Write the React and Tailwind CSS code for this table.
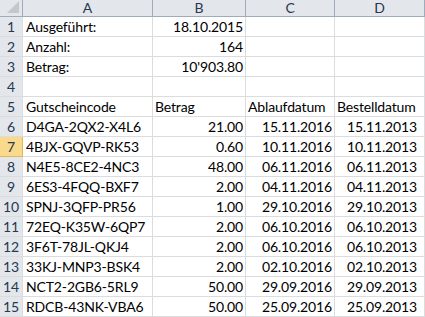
import React from 'react';

const rows = [
  { a: 'Ausgeführt:', b: '18.10.2015' },
  { a: 'Anzahl:', b: '164' },
  { a: 'Betrag:', b: "10'903.80" },
  {},
  { a: 'Gutscheincode', bl: 'Betrag', cl: 'Ablaufdatum', dl: 'Bestelldatum' },
  { a: 'D4GA-2QX2-X4L6', b: '21.00', c: '15.11.2016', d: '15.11.2013' },
  { a: '4BJX-GQVP-RK53', b: '0.60', c: '10.11.2016', d: '10.11.2013' },
  { a: 'N4E5-8CE2-4NC3', b: '48.00', c: '06.11.2016', d: '06.11.2013' },
  { a: '6ES3-4FQQ-BXF7', b: '2.00', c: '04.11.2016', d: '04.11.2013' },
  { a: 'SPNJ-3QFP-PR56', b: '1.00', c: '29.10.2016', d: '29.10.2013' },
  { a: '72EQ-K35W-6QP7', b: '2.00', c: '06.10.2016', d: '06.10.2013' },
  { a: '3F6T-78JL-QKJ4', b: '2.00', c: '06.10.2016', d: '06.10.2013' },
  { a: '33KJ-MNP3-BSK4', b: '2.00', c: '02.10.2016', d: '02.10.2013' },
  { a: 'NCT2-2GB6-5RL9', b: '50.00', c: '29.09.2016', d: '29.09.2013' },
  { a: 'RDCB-43NK-VBA6', b: '50.00', c: '25.09.2016', d: '25.09.2013' },
];

const cell = 'h-[20px] border-r border-b border-[#dadcdd] flex items-center overflow-hidden whitespace-nowrap';

export default function App() {
  return (
    <div className="w-[425px] h-[317px] overflow-hidden bg-white text-[14px] tracking-[-0.15px] text-black" style={{ fontFamily: 'Lato, "Liberation Sans", sans-serif' }}>
      <div className="grid grid-cols-[23px_130px_93px_89px_90px]">
        {/* column headers */}
        <div className="h-[17px] border-r border-b border-[#9eabbb] bg-[#e3e6ea] relative">
          <div className="absolute right-[3px] bottom-[3px] w-0 h-0 border-l-[12px] border-l-transparent border-b-[12px] border-b-[#c4c8cd]"></div>
        </div>
        {['A', 'B', 'C', 'D'].map(l => (
          <div key={l} className="h-[17px] border-r border-b border-[#9eabbb] bg-[#e3e6ea] flex items-center justify-center text-[#27384f] leading-none">
            {l}
          </div>
        ))}

        {rows.map((r, i) => (
          <React.Fragment key={i}>
            <div className={`${cell} justify-center text-[#27384f] ${i === 6 ? 'bg-[#f9d98c] border-[#e5b45b]' : 'bg-[#e3e6ea] border-[#9eabbb]'}`}>
              {i + 1}
            </div>
            <div className={`${cell} pl-[3px]`}>{r.a}</div>
            <div className={`${cell} ${r.bl ? 'pl-[2px]' : 'justify-end pr-[2px]'}`}>{r.bl || r.b}</div>
            <div className={`${cell} ${r.cl ? 'pl-[2px]' : 'justify-end pr-[2px]'}`}>{r.cl || r.c}</div>
            <div className={`${cell} ${r.dl ? 'pl-[2px]' : 'justify-end pr-[7px]'}`}>{r.dl || r.d}</div>
          </React.Fragment>
        ))}
      </div>
    </div>
  );
}
